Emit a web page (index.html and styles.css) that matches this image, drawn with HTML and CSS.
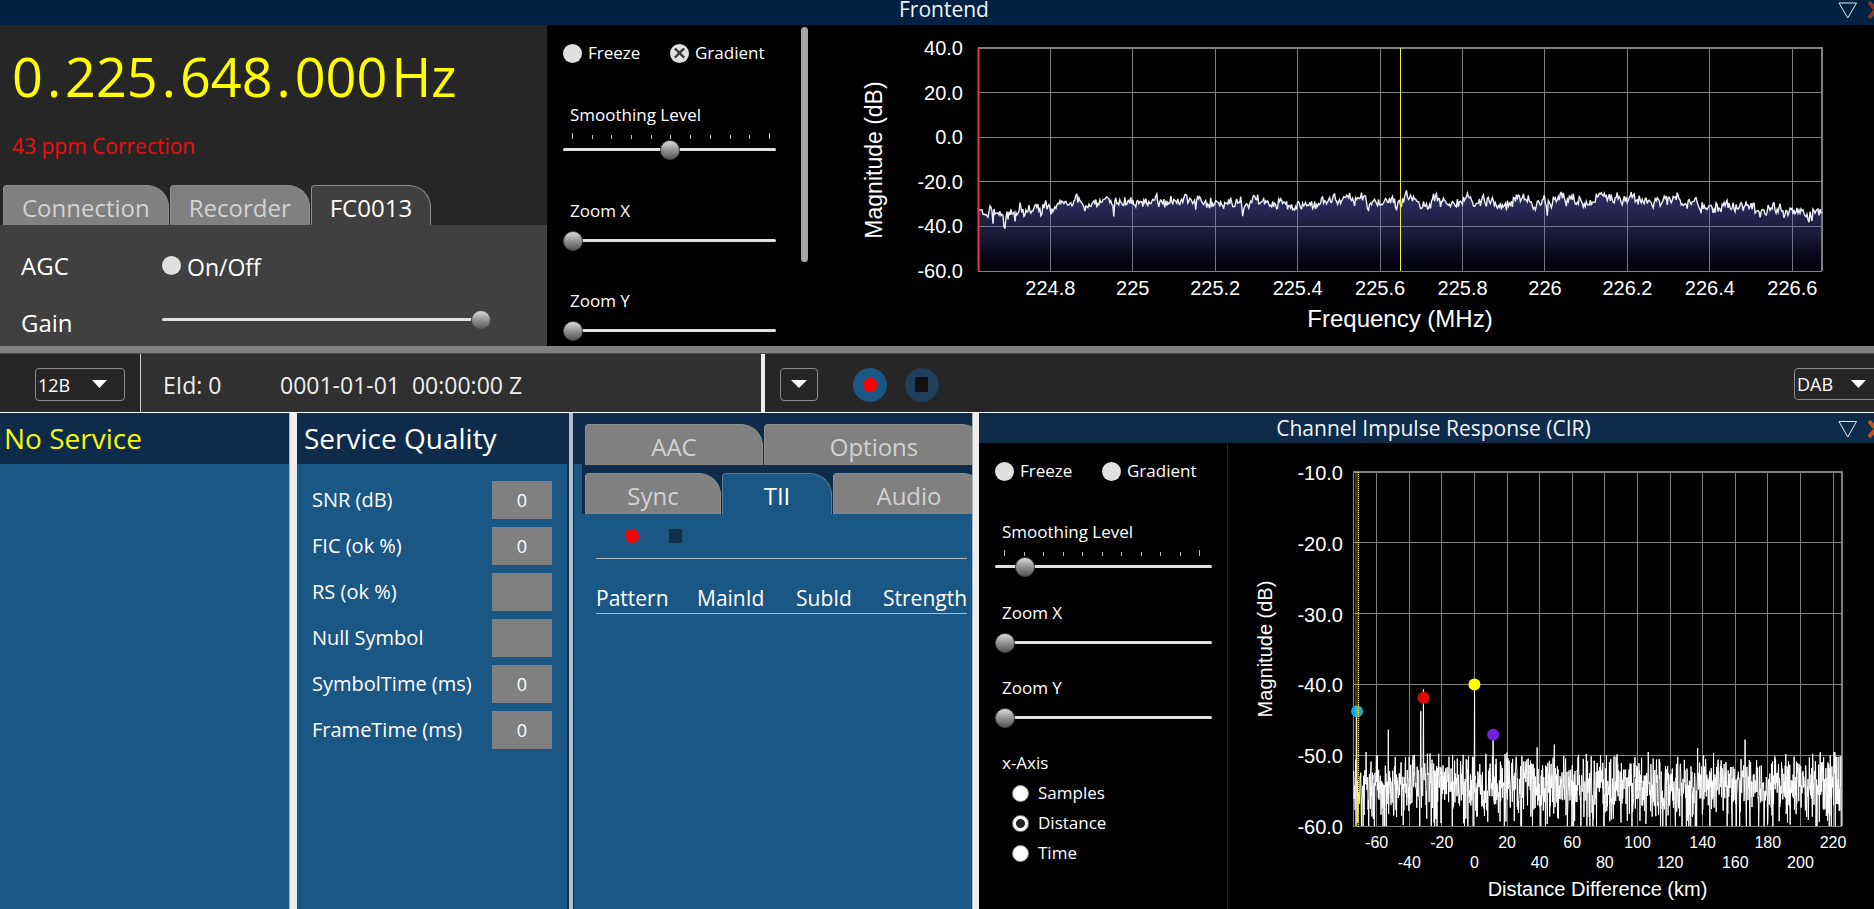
FILE: index.html
```html
<!DOCTYPE html>
<html lang="en">
<head>
<meta charset="utf-8">
<title>DAB Receiver</title>
<link rel="stylesheet" href="styles.css">
</head>
<body>
<div class="app">
  <section class="frontend">
    <header class="dock-title dock-title-top">
      <h2>Frontend</h2>
      <div class="dock-buttons">
        <button type="button" aria-label="Dock menu"><svg width="20" height="18" viewBox="0 0 20 18"><path d="M1 2H18.500L9.750 17Z" fill="none" stroke="#e4ebf2" stroke-width="1"/></svg></button>
        <button type="button" aria-label="Close"><svg width="18" height="20" viewBox="0 0 18 20"><path d="M1 2L15 18M15 2L1 18" fill="none" stroke="#7d3a2c" stroke-width="4"/></svg></button>
      </div>
    </header>
    <div class="frontend-body">
      <div class="tuner">
        <div class="frequency"><span>0</span><span class="dot">.</span><span>225</span><span class="dot">.</span><span>648</span><span class="dot">.</span><span>000</span><span class="unit">Hz</span></div>
        <div class="correction">43 ppm Correction</div>
        <div class="tabs tuner-tabs" role="tablist">
          <button type="button" class="tab" role="tab">Connection</button>
          <button type="button" class="tab" role="tab">Recorder</button>
          <button type="button" class="tab tab-active" role="tab" aria-selected="true">FC0013</button>
        </div>
        <div class="tuner-page">
          <span>AGC</span>
          <label class="check agc-check"><input type="checkbox"><span>On/Off</span></label>
          <label for="gain" class="gain-label">Gain</label>
          <input id="gain" class="slider gain" type="range" min="0" max="100" value="100">
        </div>
      </div>
      <div class="controls controls-top">
        <div class="checks">
          <label class="check"><input type="checkbox"><span>Freeze</span></label>
          <label class="check"><input type="checkbox" checked><span>Gradient</span></label>
        </div>
        <div class="field">
          <label for="smooth1">Smoothing Level</label>
          <div class="ticks"><i></i><i></i><i></i><i></i><i></i><i></i><i></i><i></i><i></i><i></i><i></i></div>
          <input id="smooth1" class="slider" type="range" min="0" max="10" value="5">
        </div>
        <div class="field">
          <label for="zx1">Zoom X</label>
          <input id="zx1" class="slider" type="range" min="0" max="10" value="0">
        </div>
        <div class="field">
          <label for="zy1">Zoom Y</label>
          <input id="zy1" class="slider" type="range" min="0" max="10" value="0">
        </div>
        <div class="scrollbar"></div>
      </div>
      <svg class="chart" id="spectrum" role="img" aria-label="Spectrum"></svg>
    </div>
  </section>

  <div class="splitter-h"></div>

  <section class="toolbar">
    <div class="channel">
      <div class="select"><select aria-label="Channel"><option>12B</option></select></div>
    </div>
    <div class="ensemble"><span>EId: 0</span><span class="clock">0001-01-01&nbsp; 00:00:00 Z</span></div>
    <div class="transport">
      <button type="button" class="drop" aria-label="Service list"><svg width="16" height="9" viewBox="0 0 16 9"><path d="M0 0H16L8 8Z" fill="#fff"/></svg></button>
      <button type="button" class="round rec" aria-label="Record"><svg width="34" height="34" viewBox="0 0 34 34"><circle cx="17" cy="17" r="17" fill="#1a5785"/><circle cx="17" cy="17" r="7" fill="#f00"/></svg></button>
      <button type="button" class="round" aria-label="Stop"><svg width="34" height="34" viewBox="0 0 34 34"><circle cx="17" cy="17" r="17" fill="#1f3f5b"/><path d="M10 9H23V24H10Z" fill="#111"/></svg></button>
      <div class="select mode"><select aria-label="Mode"><option>DAB</option></select></div>
    </div>
  </section>

  <main class="lower">
    <section class="panel services"><h1 class="no-service">No Service</h1></section>
    <div class="splitter-v"></div>
    <section class="panel quality">
      <h1>Service Quality</h1>
      <dl>
        <dt>SNR (dB)</dt><dd>0</dd>
        <dt>FIC (ok %)</dt><dd>0</dd>
        <dt>RS (ok %)</dt><dd></dd>
        <dt>Null Symbol</dt><dd></dd>
        <dt>SymbolTime (ms)</dt><dd>0</dd>
        <dt>FrameTime (ms)</dt><dd>0</dd>
      </dl>
    </section>
    <div class="splitter-thin"></div>
    <section class="panel details">
      <div class="tab-rows">
        <div class="tabs" role="tablist">
          <button type="button" class="tab wide-aac" role="tab">AAC</button>
          <button type="button" class="tab wide-options" role="tab">Options</button>
        </div>
        <div class="tabs" role="tablist">
          <button type="button" class="tab wide-sync" role="tab">Sync</button>
          <button type="button" class="tab tab-active tab-blue wide-tii" role="tab" aria-selected="true">TII</button>
          <button type="button" class="tab wide-audio" role="tab">Audio</button>
        </div>
      </div>
      <div class="tii">
        <div class="tii-tools">
          <button type="button" aria-label="Record TII"><svg width="14" height="16" viewBox="0 0 14 16"><circle cx="7" cy="8" r="7" fill="#f00"/></svg></button>
          <button type="button" aria-label="Stop TII"><svg width="14" height="16" viewBox="0 0 14 16"><path d="M0 1H13V15H0Z" fill="#0f2f48"/></svg></button>
        </div>
        <table>
          <thead><tr><th>Pattern</th><th>MainId</th><th>SubId</th><th>Strength</th></tr></thead>
        </table>
      </div>
    </section>
    <div class="splitter-v narrow"></div>
    <section class="cir">
      <header class="dock-title">
        <h2>Channel Impulse Response (CIR)</h2>
        <div class="dock-buttons">
          <button type="button" aria-label="Dock menu"><svg width="20" height="18" viewBox="0 0 20 18"><path d="M1 1.500H18.500L9.750 17Z" fill="none" stroke="#e4ebf2" stroke-width="1"/></svg></button>
          <button type="button" aria-label="Close"><svg width="18" height="20" viewBox="0 0 18 20"><path d="M1 2L15 18M15 2L1 18" fill="none" stroke="#c4531f" stroke-width="4"/></svg></button>
        </div>
      </header>
      <div class="cir-body">
        <div class="controls controls-cir">
          <div class="checks">
            <label class="check"><input type="checkbox"><span>Freeze</span></label>
            <label class="check"><input type="checkbox"><span>Gradient</span></label>
          </div>
          <div class="field">
            <label for="smooth2">Smoothing Level</label>
            <div class="ticks"><i></i><i></i><i></i><i></i><i></i><i></i><i></i><i></i><i></i><i></i><i></i></div>
            <input id="smooth2" class="slider" type="range" min="0" max="10" value="1">
          </div>
          <div class="field">
            <label for="zx2">Zoom X</label>
            <input id="zx2" class="slider" type="range" min="0" max="10" value="0">
          </div>
          <div class="field">
            <label for="zy2">Zoom Y</label>
            <input id="zy2" class="slider" type="range" min="0" max="10" value="0">
          </div>
          <fieldset>
            <legend>x-Axis</legend>
            <label class="radio"><input type="radio" name="xaxis"><span>Samples</span></label>
            <label class="radio"><input type="radio" name="xaxis" checked><span>Distance</span></label>
            <label class="radio"><input type="radio" name="xaxis"><span>Time</span></label>
          </fieldset>
        </div>
        <svg class="chart" id="impulse" role="img" aria-label="Channel impulse response"></svg>
      </div>
    </section>
  </main>
</div>
<script src="charts.js"></script>
</body>
</html>
```
FILE: styles.css
```css
* { box-sizing: border-box; }

body {
  margin: 0;
  overflow: hidden;
  background: #000;
  color: #fff;
  font-family: "Open Sans", "Noto Sans", sans-serif;
  font-size: 17px;
}

button, select {
  font: inherit;
  color: inherit;
  border: 0;
  padding: 0;
  background: none;
}

svg { display: block; }

h1, h2 { margin: 0; font-weight: 400; }

/* The window is slightly wider than the view, so its right edge is cut. */
.app {
  width: calc(100% + 14px);
  height: 100vh;
  display: flex;
  flex-direction: column;
  overflow: hidden;
}

/* dock titles */
.dock-title {
  position: relative;
  flex: none;
  height: 30px;
  background: #0e2b4a;
  text-align: center;
}
.dock-title h2 { font-size: 21px; line-height: 30px; color: #f2f5f8; }
.dock-title-top { height: 25px; background: #00213f; }
.dock-title-top h2 { line-height: 18px; }
.dock-buttons {
  position: absolute;
  top: 6px;
  right: 2px;
  display: flex;
  gap: 10px;
}
.dock-title-top .dock-buttons { top: 0; }

/* frontend */
.frontend-body { display: flex; height: 321px; background: #000; }
.tuner {
  width: 547px;
  flex: none;
  display: flex;
  flex-direction: column;
  background: #262626;
}
.frequency {
  display: flex;
  padding: 15px 0 0 12px;
  font-size: 54px;
  line-height: 72px;
  color: #ff0;
}
.dot { padding: 0 4px; }
.unit { padding-left: 4px; }
.correction {
  flex: none;
  padding: 19px 0 0 12px;
  height: 73px;
  font-size: 21px;
  line-height: 30px;
  color: #f00c0c;
}
.tabs { display: flex; gap: 1px; }
.tab {
  height: 41px;
  padding: 4px 18px 0;
  border: 1px solid #8e8e8e;
  border-bottom: 0;
  border-radius: 4px 22px 0 0;
  background: #808080;
  color: #d2d2d2;
  font-size: 24px;
  line-height: 36px;
  flex: none;
}
.tab-active { background: #404040; color: #fff; }
.tab-blue { background: #1a5785; border-color: #5a7c96; }
.tuner-tabs { flex: none; padding-left: 3px; height: 40px; }
.tuner-tabs .tab { height: 42px; padding-top: 2px; }
.tuner-page {
  flex: 1;
  display: grid;
  grid-template-columns: 141px 329px;
  grid-template-rows: 58px 34px;
  row-gap: 12px;
  align-items: center;
  align-content: start;
  padding: 11px 0 0 21px;
  background: #404040;
  font-size: 24px;
}
.agc-check { font-size: 23px; gap: 5px; }
.agc-check span { padding-top: 4px; }
.gain-label { line-height: 34px; }

/* plot controls */
.controls { flex: none; position: relative; overflow: hidden; line-height: 24px; }
.controls-top { width: 262px; padding: 16px 33px 0 16px; }
.controls-cir { width: 249px; padding: 16px 15px 0 16px; border-right: 1px solid #222; }
.checks { display: flex; gap: 40px; }
.check { display: flex; align-items: center; gap: 6px; }
.checks .check:first-child { width: 67px; white-space: nowrap; }
.check input {
  appearance: none;
  position: relative;
  flex: none;
  width: 19px;
  height: 19px;
  margin: 0;
  border-radius: 50%;
  background: #e0e0e0;
}
.check input:checked::before {
  content: "";
  position: absolute;
  inset: 4px;
  background: #3c3c3c;
  clip-path: polygon(15% 0, 50% 35%, 85% 0, 100% 15%, 65% 50%, 100% 85%, 85% 100%, 50% 65%, 15% 100%, 0 85%, 35% 50%, 0 15%);
}
.field { display: flex; flex-direction: column; }
.field label, legend { padding-left: 7px; }
.ticks {
  display: flex;
  justify-content: space-between;
  align-items: flex-end;
  height: 8px;
  margin: 4px 6px 0 9px;
}
.controls-cir .ticks { margin-right: 12px; }
.ticks i { width: 1px; height: 4px; background: #bbb; }
.ticks i:first-child, .ticks i:last-child { height: 6px; }

.controls-top .field { height: 90px; }
.controls-top .field:nth-child(2) { height: 96px; margin-top: 38px; }
.controls-cir .field { height: 75px; }
.controls-cir .field:nth-child(2) { height: 81px; margin-top: 37px; }
.field > label + .slider { margin-top: 7px; }

.slider {
  appearance: none;
  width: 100%;
  height: 20px;
  margin: 0;
  background: none;
}
.slider::-webkit-slider-runnable-track {
  height: 3px;
  border-radius: 2px;
  background: #e0e0e0;
}
.slider::-webkit-slider-thumb {
  appearance: none;
  width: 20px;
  height: 20px;
  margin-top: -8px;
  border: 1px solid #444;
  border-radius: 50%;
  background: linear-gradient(#dcdcdc, #999 45%, #565656);
}
.gain { margin-bottom: 8px; }
.scrollbar {
  position: absolute;
  top: 2px;
  right: 1px;
  width: 7px;
  height: 235px;
  border-radius: 4px;
  background: #a5a5a5;
}
fieldset { border: 0; margin: 0; padding: 0; }
legend { padding-bottom: 3px; }
.radio {
  display: flex;
  align-items: center;
  gap: 9px;
  height: 30px;
  padding-left: 17px;
}
.radio input {
  appearance: none;
  width: 17px;
  height: 17px;
  margin: 0;
  border: 1px solid #888;
  border-radius: 50%;
  background: #fff;
}
.radio input:checked { background: radial-gradient(circle, #222 4px, #fff 5px); }

.chart { flex: 1; min-width: 0; height: 100%; font-family: "Liberation Sans", Arial, sans-serif; fill: #fff; }

/* splitters */
.splitter-h { flex: none; height: 8px; background: #808080; border-bottom: 1px solid #484848; }
.splitter-v { flex: none; width: 8px; background: #eee; border-left: 1px solid #aab4be; }
.narrow { width: 7px; }
.splitter-thin { flex: none; width: 7px; background: #b4c0cd; border: solid #0e2b4a; border-width: 0 1px 0 2px; }

/* toolbar */
.toolbar { flex: none; display: flex; height: 59px; border-bottom: 1px solid #fff; background: #262626; }
.channel { width: 141px; padding: 14px 0 0 35px; border-right: 1px solid #ccc; }
.select { position: relative; width: 90px; height: 33px; }
.select select {
  appearance: none;
  width: 100%;
  height: 100%;
  padding: 0 2px;
  border: 1px solid #8a8a8a;
  border-radius: 4px;
  font-size: 18px;
}
.select::after {
  content: "";
  position: absolute;
  top: 12px;
  right: 18px;
  width: 15px;
  height: 8px;
  background: #fff;
  clip-path: polygon(0 0, 100% 0, 50% 100%);
  pointer-events: none;
}
.ensemble {
  flex: none;
  display: flex;
  width: 624px;
  padding-left: 22px;
  border-right: 4px solid #eee;
  background: #303030;
  color: #eee;
  font-size: 23px;
  line-height: 62px;
}
.ensemble span:first-child { width: 117px; }
.transport { flex: 1; display: flex; align-items: flex-start; padding: 14px 4px 0 15px; }
.drop {
  display: grid;
  place-items: center;
  width: 38px;
  height: 33px;
  border: 1px solid #8a8a8a;
  border-radius: 4px;
}
.rec { margin: 0 18px 0 35px; }
.mode { margin-left: auto; height: 32px; }

/* lower panels */
.lower { flex: 1; display: flex; min-height: 0; }
.panel { flex: none; background: #1a5785; overflow: hidden; }
.panel h1 { height: 51px; background: #0e2b4a; font-size: 28px; line-height: 50px; }
.services { width: 289px; }
.services h1 { padding-left: 4px; }
.no-service { color: #f4f80c; }
.quality { width: 270px; }
.quality h1 { padding-left: 7px; }
.quality dl {
  display: grid;
  grid-template-columns: 1fr 60px;
  row-gap: 8px;
  align-items: center;
  margin: 0;
  padding: 17px 15px 0;
  font-size: 20px;
  line-height: 38px;
}
.quality dd {
  height: 38px;
  margin: 0;
  background: #808080;
  font-size: 18px;
  text-align: center;
}
.details { width: 398px; }
.tab-rows {
  display: flex;
  flex-direction: column;
  gap: 8px;
  padding: 11px 0 0 11px;
  background: linear-gradient(#1a5785, #1a5785) 0 51px / 8px 100% no-repeat #0e2b4a;
}
.tab-rows .tab { padding: 4px 0 0; }
.wide-aac { width: 178px; }
.wide-options { width: 220px; }
.wide-sync { width: 136px; }
.wide-tii { width: 110px; }
.wide-audio { width: 152px; }
.tii { padding: 0 5px 0 22px; }
.tii-tools { display: flex; gap: 30px; height: 45px; padding: 14px 0 0 29px; border-bottom: 1px solid #a8bccb; }
.tii-tools button { height: 16px; }
.tii table { width: 100%; table-layout: fixed; border-collapse: collapse; margin-top: 24px; }
.tii th {
  padding: 0;
  width: 99px;
  border-bottom: 1px solid #a8bccb;
  font-size: 21px;
  font-weight: 400;
  line-height: 30px;
  text-align: left;
}
.tii th:first-child { width: 101px; }
.tii th:last-child { width: auto; text-align: right; }
.tii th:nth-child(3) { width: 87px; }

.cir { flex: 1; min-width: 0; display: flex; flex-direction: column; background: #000; }
.cir-body { flex: 1; display: flex; min-height: 0; }
```
FILE: charts.js
```js
const NS = "http://www.w3.org/2000/svg";

function add(parent, name, attrs, text) {
  const el = document.createElementNS(NS, name);
  for (const k in attrs) el.setAttribute(k, attrs[k]);
  if (text !== undefined) el.textContent = text;
  parent.appendChild(el);
  return el;
}

function random(seed) {
  return function () {
    seed = (seed * 1664525 + 1013904223) >>> 0;
    return (seed + 1) / 4294967297;
  };
}

function line(svg, x1, y1, x2, y2, color, width) {
  add(svg, "line", { x1, y1, x2, y2, stroke: color, "stroke-width": width });
}

const snap = v => Math.floor(v) + 0.5;

function frame(svg, p, xs, ys) {
  xs.forEach(x => line(svg, snap(x), p.t, snap(x), p.b, "#808080", 1));
  ys.forEach(y => line(svg, p.l, snap(y), p.r, snap(y), "#808080", 1));
  line(svg, p.l, p.t, p.r + 1, p.t, "#808080", 2);
  line(svg, p.r, p.t, p.r, p.b, "#808080", 2);
}

function spectrum() {
  const svg = document.getElementById("spectrum");
  svg.replaceChildren();
  const w = svg.clientWidth;
  const p = { l: 169, r: w - 66, t: 23, b: 246 };
  const pw = p.r - p.l;
  const fx = f => p.l + (f - 224.6245) / 2.0475 * pw;
  const fy = d => p.t + (40 - d) / 100 * (p.b - p.t);
  const freqs = [224.8, 225, 225.2, 225.4, 225.6, 225.8, 226, 226.2, 226.4, 226.6];
  const levels = [40, 20, 0, -20, -40, -60];

  const shape = [[0, 211], [25, 213], [45, 209], [72, 206], [120, 201], [160, 201], [200, 200], [250, 202], [300, 201],
    [340, 205], [380, 200], [430, 199], [500, 202], [600, 202], [700, 199], [735, 205], [790, 209], [845, 214]];
  const dips = { 15: 9, 26: 9, 27: 17, 37: 7, 136: 7, 218: 9, 265: 7, 418: 9, 419: 13, 420: 9, 467: -5, 691: -7, 570: 8, 835: 7 };
  const rnd = random(77);
  let drift = 0;
  const pts = [];
  const n = 845;
  for (let i = 0; i <= n; i++) {
    let k = 1;
    while (shape[k][0] < i) k++;
    const a = shape[k - 1], b = shape[k];
    const base = a[1] + (b[1] - a[1]) * (i - a[0]) / (b[0] - a[0]);
    drift = drift * 0.72 + (rnd() - 0.5) * 7.5;
    const y = base - 25 + drift + (rnd() - 0.5) * 7 + (dips[i] || 0);
    pts.push((p.l + i / n * pw).toFixed(1) + " " + y.toFixed(1));
  }
  const defs = add(svg, "defs", {});
  const g = add(defs, "linearGradient", { id: "fade", x1: 0, x2: 0, y1: 170, y2: p.b, gradientUnits: "userSpaceOnUse" });
  add(g, "stop", { offset: 0, "stop-color": "#7070e8", "stop-opacity": 0.42 });
  add(g, "stop", { offset: 0.55, "stop-color": "#5a5ac8", "stop-opacity": 0.27 });
  add(g, "stop", { offset: 1, "stop-color": "#2020a0", "stop-opacity": 0.06 });

  frame(svg, p, freqs.map(fx), levels.slice(1).map(fy));
  add(svg, "path", { d: "M" + p.l + " " + p.b + "L" + pts.join("L") + "L" + p.r + " " + p.b + "Z", fill: "url(#fade)" });
  add(svg, "path", { d: "M" + pts.join("L"), fill: "none", stroke: "#eeeef6", "stroke-width": 1.4 });
  line(svg, p.l + 0.5, p.t, p.l + 0.5, p.b, "#d84040", 2);
  line(svg, snap(fx(225.649)), p.t, snap(fx(225.649)), p.b, "#f0f040", 1);

  levels.forEach(d => add(svg, "text", { x: 154, y: fy(d) + 7, "font-size": 20, "text-anchor": "end" }, d.toFixed(1)));
  freqs.forEach(f => add(svg, "text", { x: fx(f), y: 270, "font-size": 20, "text-anchor": "middle" }, String(f)));
  add(svg, "text", { x: (p.l + p.r) / 2, y: 302, "font-size": 24, "text-anchor": "middle" }, "Frequency (MHz)");
  add(svg, "text", { x: 0, y: 0, "font-size": 23, "text-anchor": "middle", transform: "translate(73 135) rotate(-90)" }, "Magnitude (dB)");
}

function impulse() {
  const svg = document.getElementById("impulse");
  svg.replaceChildren();
  const w = svg.clientWidth;
  const h = svg.clientHeight;
  const p = { l: 125, r: w - 46, t: 29, b: h - 83 };
  const pw = p.r - p.l;
  const fx = km => p.l + (km + 74.5) / 300 * pw;
  const fy = d => p.t + (-10 - d) / 50 * (p.b - p.t);
  const kms = [];
  for (let k = -60; k <= 220; k += 20) kms.push(k);
  const levels = [-10, -20, -30, -40, -50, -60];
  frame(svg, p, kms.map(fx), levels.slice(1).map(fy));
  line(svg, p.l + 0.5, p.t, p.l + 0.5, p.b, "#808080", 1);

  const peaks = [[-72.4, -43.8], [-52.8, -46.4], [-33, -43.8], [-31.2, -40.7], [0, -40], [11.5, -46.8],
    [166, -47.8], [38.5, -48.9], [49, -48.5], [137, -49]];
  const rnd = random(4242);
  const pts = [];
  const n = 1470;
  const km0 = -74, km1 = 225;
  for (let i = 0; i <= n; i++) {
    const km = km0 + (km1 - km0) * i / n;
    const power = -(Math.log(rnd()) + Math.log(rnd()) + Math.log(rnd())) / 3;
    let d = Math.min(-49.5 - rnd() * 0.8, -53.8 + 10 * Math.log10(power));
    for (const q of peaks) if (Math.abs(km - q[0]) < 0.11) d = q[1];
    pts.push(fx(km).toFixed(2) + " " + fy(Math.max(d, -60)).toFixed(1));
  }
  add(svg, "path", { d: "M" + pts.join("L"), fill: "none", stroke: "#fff", "stroke-width": 1 });

  [[-72, -43.8, "#10a8e0"], [-31.2, -41.9, "#e00808"], [0, -40, "#ff0"], [11.5, -47.1, "#7420d8"]]
    .forEach(m => add(svg, "circle", { cx: fx(m[0]), cy: fy(m[1]), r: 6, fill: m[2] }));

  add(svg, "rect", { x: p.l + 2, y: p.t, width: 4, height: p.b - p.t, fill: "#c8c860", "fill-opacity": 0.3 });
  add(svg, "line", { x1: p.l + 5.5, x2: p.l + 5.5, y1: p.t, y2: p.b + 2, stroke: "#f0f040", "stroke-dasharray": "1 1" });

  levels.forEach(d => add(svg, "text", { x: 115, y: fy(d) + 8, "font-size": 20, "text-anchor": "end" }, d.toFixed(1)));
  kms.forEach((k, i) => add(svg, "text", { x: fx(k), y: p.b + (i % 2 ? 42 : 22), "font-size": 16, "text-anchor": "middle" }, String(k)));
  add(svg, "text", { x: (p.l + p.r) / 2, y: p.b + 70, "font-size": 20, "text-anchor": "middle" }, "Distance Difference (km)");
  add(svg, "text", { x: 0, y: 0, "font-size": 20, "text-anchor": "middle", transform: "translate(44 " + (p.t + p.b) / 2 + ") rotate(-90)" }, "Magnitude (dB)");
}

function draw() {
  spectrum();
  impulse();
}
window.addEventListener("resize", draw);
draw();
```
